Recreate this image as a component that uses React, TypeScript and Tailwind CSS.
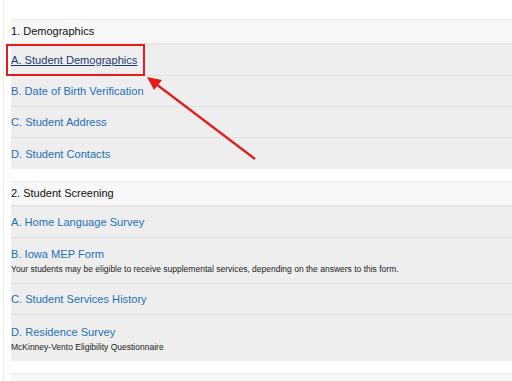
import React from 'react';

type Item = { label: string; desc?: string };
type Section = { title: string; items: Item[] };

const sections: Section[] = [
  {
    title: '1. Demographics',
    items: [
      { label: 'A. Student Demographics' },
      { label: 'B. Date of Birth Verification' },
      { label: 'C. Student Address' },
      { label: 'D. Student Contacts' },
    ],
  },
  {
    title: '2. Student Screening',
    items: [
      { label: 'A. Home Language Survey' },
      {
        label: 'B. Iowa MEP Form',
        desc: 'Your students may be eligible to receive supplemental services, depending on the answers to this form.',
      },
      { label: 'C. Student Services History' },
      { label: 'D. Residence Survey', desc: 'McKinney-Vento Eligibility Questionnaire' },
    ],
  },
  {
    title: '3. Health',
    items: [],
  },
];

const App: React.FC = () => {
  return (
    <div
      className="relative w-[512px] h-[381px] overflow-hidden bg-white"
      style={{ fontFamily: '"Liberation Sans", Arial, sans-serif' }}
    >
      <div className="h-full ml-[3px] border-l border-[#ececec] pl-[7px] pt-[19px] flex flex-col gap-[12px]">
        {sections.map((section, si) => (
          <div key={si}>
            {/* Section header */}
            <div className="h-[26px] border-t border-[#ebebeb] border-b-2 border-b-[#e4e4e4] bg-[#f7f7f7] flex items-center text-[11px] text-[#111]">
              {section.title}
            </div>
            {/* Section items */}
            <div className="bg-[#eeeeee]">
              {section.items.map((item, ii) => (
                <div
                  key={ii}
                  className={`flex flex-col justify-center ${item.desc ? 'h-[46px]' : 'h-[31px]'} ${ii < section.items.length - 1 ? 'border-b border-[#e0e0e0]' : ''}`}
                >
                  <span
                    className={`text-[11.1px] leading-[14px] ${si === 0 && ii === 0 ? 'text-[#1d3b6f] underline' : 'text-[#2470b6]'}`}
                  >
                    {item.label}
                  </span>
                  {item.desc && (
                    <span className="text-[8.5px] leading-[10px] mt-[3px] text-[#222]">{item.desc}</span>
                  )}
                </div>
              ))}
            </div>
          </div>
        ))}
      </div>

      {/* Annotation: highlight box */}
      <div className="absolute left-[6px] top-[44px] w-[139px] h-[32px] border-2 border-[#e31c1c]" />

      {/* Annotation: arrow */}
      <svg className="absolute left-0 top-0" width="512" height="381" viewBox="0 0 512 381">
        <line x1="255" y1="159" x2="156" y2="84" stroke="#e31c1c" strokeWidth="2.2" />
        <polygon points="147,77 162,80 154,90" fill="#e31c1c" />
      </svg>
    </div>
  );
};

export default App;
